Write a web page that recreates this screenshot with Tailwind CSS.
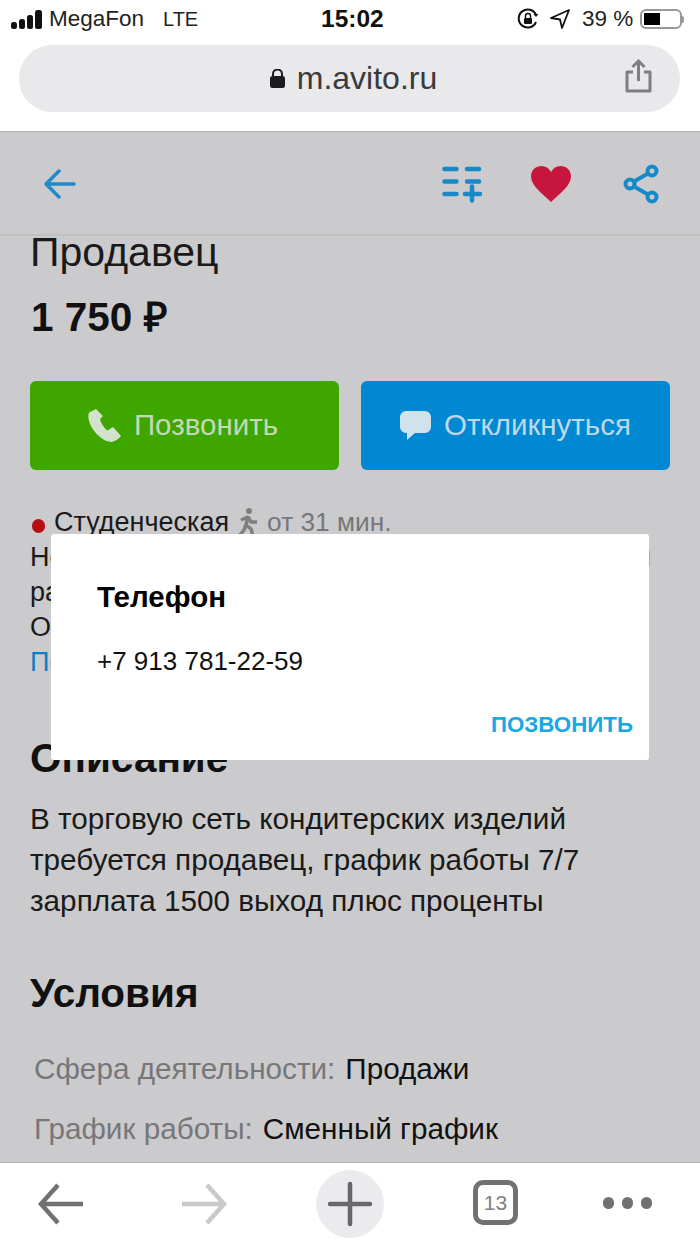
<!DOCTYPE html>
<html lang="ru">
<head>
  <meta charset="UTF-8" />
  <meta name="viewport" content="width=device-width, initial-scale=1.0" />
  <script src="https://cdn.jsdelivr.net/npm/@tailwindcss/browser@4"></script>
  <title>m.avito.ru</title>
</head>
<body class="bg-white font-['Liberation_Sans',Arial,sans-serif]">
  <div class="relative w-[700px] h-[1245px] overflow-hidden flex flex-col">

    <!-- browser top -->
    <div class="h-[131px] shrink-0 bg-white">
      <div class="h-[45px] flex items-center pl-[11px] pb-[7px] text-[22.500px] text-[#222]">
        <svg class="w-[31px] h-[19px] shrink-0" viewBox="0 0 31 19" fill="#111">
          <rect x="0" y="12" width="6" height="7" rx="2.500" />
          <rect x="8" y="9" width="6" height="10" rx="2.500" />
          <rect x="16" y="5" width="6" height="14" rx="2.500" />
          <rect x="24" y="0" width="7" height="19" rx="2.500" />
        </svg>
        <span class="ml-[7px] w-[96px]">MegaFon</span>
        <span class="ml-[18px] w-[158px] text-[20px]">LTE</span>
        <span class="w-[62px] font-bold text-[24.500px] text-[#111]">15:02</span>
        <svg class="ml-[134px] w-[22px] h-[22px] shrink-0" viewBox="0 0 22 22" fill="none" stroke="#111" stroke-width="2">
          <path d="M19 14a9 9 0 1 1 0-7" />
          <path d="M21.500 6l-2.500 3l-2.500-3z" fill="#111" stroke="none" />
          <rect x="7" y="10" width="8" height="6" rx="1" fill="#111" stroke="none" />
          <path d="M8.500 10V8a2.500 2.500 0 0 1 5 0v2" stroke-width="1.500" />
        </svg>
        <svg class="ml-[10px] w-[22px] h-[22px] shrink-0" viewBox="0 0 22 22" fill="none" stroke="#111" stroke-width="1.800" stroke-linejoin="round">
          <path d="M20 2L2 10l9 1.500L13 20z" />
        </svg>
        <span class="ml-[11px] w-[52px] whitespace-nowrap">39 %</span>
        <div class="ml-[6px] w-[42px] h-[20px] shrink-0 border-2 border-[#999] rounded-[6px] p-[2px]">
          <div class="w-[16px] h-full bg-black"></div>
        </div>
        <div class="w-[2px] h-[7px] shrink-0 bg-[#999] rounded-r-sm"></div>
      </div>
      <div class="mx-[19px] w-[661px] h-[67px] rounded-[33px] bg-[#e9e9eb] relative flex items-center justify-center pl-[8px]">
        <svg class="w-[15px] h-[19px] mr-[12px]" viewBox="0 0 15 19" fill="#1c1c1e">
          <rect x="0" y="7" width="15" height="12" rx="2.500" />
          <path d="M3 8V5a4.500 4.500 0 0 1 9 0v3" fill="none" stroke="#1c1c1e" stroke-width="2" />
        </svg>
        <span class="text-[32px] leading-[36px] mb-[2px] text-[#3a3a3c]">m.avito.ru</span>
        <svg class="absolute left-[606px] top-[14px] w-[27px] h-[34px]" viewBox="0 0 27 34" fill="none" stroke="#7d7f82" stroke-width="3">
          <path d="M8 13H2v19h23V13h-6" stroke-linejoin="round" />
          <path d="M13.500 22V2M7.500 8l6-6l6 6" />
        </svg>
      </div>
    </div>

    <!-- page -->
    <div class="relative flex-1 min-h-0 bg-[#cbcbcd] overflow-hidden">
      <header class="h-[105px] border-t border-[#b4b4b5] border-b-2 border-b-[#c1c1c2] flex items-center relative">
        <svg class="absolute left-[44px] top-[37px] w-[32px] h-[30px]" viewBox="0 0 32 30" fill="none" stroke="#1f8cc9" stroke-width="3.500" stroke-linecap="round" stroke-linejoin="round">
          <path d="M30 15H3M15 2L2 15l13 13" />
        </svg>
        <svg class="absolute left-[442px] top-[34px] w-[40px] h-[37px]" viewBox="0 0 40 37" fill="none" stroke="#1689c9" stroke-width="4.500" stroke-linecap="round">
          <path d="M2.500 3h12M25 3h12M2.500 15.500h12M25 15.500h12M2.500 28h12M23 28h15M30 20.500v14" />
        </svg>
        <svg class="absolute left-[531px] top-[34px] w-[40px] h-[36px]" viewBox="0 0 40 36" fill="#c7163d">
          <path d="M20 36C12 28 0 20 0 10.500C0 4 5 0 10.500 0C14.500 0 18 2 20 6C22 2 25.500 0 29.500 0C35 0 40 4 40 10.500C40 20 28 28 20 36z" />
        </svg>
        <svg class="absolute left-[623px] top-[32px] w-[36px] h-[40px]" viewBox="0 0 36 40" fill="none" stroke="#1689c9" stroke-width="4">
          <circle cx="29" cy="7" r="4.500" />
          <circle cx="7" cy="20" r="4.500" />
          <circle cx="29" cy="33" r="4.500" />
          <path d="M25 9.500L11 17.500M11 22.500L25 30.500" />
        </svg>
      </header>

      <div class="px-[30px]">
        <h1 class="text-[41px] leading-[40px] mt-[-4px] text-[#1a1a1a]">Продавец</h1>
        <p class="mt-[23px] pl-[1px] text-[40.500px] leading-[44px] font-bold text-[#111]">1 750 ₽</p>

        <div class="mt-[42px] flex gap-[22px]">
          <button class="w-[309px] h-[89px] rounded-[6px] bg-[#3fa600] flex items-center justify-center text-[29.500px] text-[#c4d9b8]">
            <svg class="w-[33px] h-[33px] mr-[13px] mb-[1px]" viewBox="0 0 33 33" fill="#d3e2cc">
              <path d="M8 0L1 3.500C-1 9 2 17 7 23C12 29 18 33 24 33C27 32 31 30 33 27L25 18L19.500 21.500C16 19 13 14 12 10L15 7z" />
            </svg>
            <span class="mr-[3px]">Позвонить</span>
          </button>
          <button class="w-[309px] h-[89px] rounded-[6px] bg-[#0088d2] flex items-center justify-center text-[29.500px] text-[#bcd9ea]">
            <svg class="w-[31px] h-[29px] mr-[13px]" viewBox="0 0 31 29" fill="#d0e2ec">
              <path d="M6 0h19a6 6 0 0 1 6 6v10a6 6 0 0 1-6 6H15l-8 7v-7H6a6 6 0 0 1-6-6V6a6 6 0 0 1 6-6z" />
            </svg>
            Откликнуться
          </button>
        </div>

        <div class="mt-[35px] text-[27px] leading-[35px] text-[#1a1a1a]">
          <div class="flex items-center">
            <span class="ml-[2px] w-[13px] h-[14px] rounded-full bg-[#b50f12] mt-[6px] mr-[9px]"></span>
            <span>Студенческая</span>
            <svg class="ml-[8px] w-[22px] h-[29px]" viewBox="0 0 22 29" fill="none" stroke="#7f7f80" stroke-width="3.500">
              <circle cx="12" cy="3" r="3" fill="#7f7f80" stroke="none" />
              <path d="M11 8L9 17M9 17l5 4l2 7M9 17l-2 5l-5 6M11 9L4 12M11 9l3 5h6" />
            </svg>
            <span class="ml-[8px] text-[26.300px] text-[#77777a]">от 31 мин.</span>
          </div>
          <div class="flex justify-between pr-[19px]"><span>Не</span><span>н</span></div>
          <div>ра</div>
          <div>О.</div>
          <div class="text-[#0a7fc4]">По</div>
        </div>

        <h2 class="mt-[56px] text-[40.500px] leading-[44px] font-bold text-[#111]">Описание</h2>
        <p class="mt-[18px] text-[29.700px] leading-[41px] text-[#1a1a1a]">В торговую сеть кондитерских изделий<br />требуется продавец, график работы 7/7<br />зарплата 1500 выход плюс проценты</p>

        <h2 class="mt-[50px] text-[40.500px] leading-[44px] font-bold text-[#111]">Условия</h2>
        <dl class="mt-[34px] pl-[4px] text-[29.700px] leading-[40px]">
          <div class="flex gap-[10px]"><dt class="text-[#77777a]">Сфера деятельности:</dt><dd class="text-[#111]">Продажи</dd></div>
          <div class="mt-[20px] flex gap-[10px]"><dt class="text-[#77777a]">График работы:</dt><dd class="text-[#111]">Сменный график</dd></div>
        </dl>
      </div>
    </div>

    <!-- phone dialog -->
    <div class="absolute left-[51px] top-[534px] w-[598px] h-[226px] bg-white rounded-[3px] pl-[46px] pr-[16px] pt-[47px]">
      <h3 class="text-[29.500px] leading-[32px] font-bold text-black">Телефон</h3>
      <p class="mt-[33px] text-[26px] leading-[30px] text-[#111]">+7 913 781-22-59</p>
      <div class="mt-[34px] text-right text-[22.300px] leading-[30px] font-bold text-[#19a7e6]">ПОЗВОНИТЬ</div>
    </div>

    <!-- browser bottom -->
    <nav class="h-[83px] shrink-0 bg-white border-t border-[#b0b0b1] relative">
      <svg class="absolute left-[37px] top-[20px] w-[46px] h-[42px]" viewBox="0 0 46 42" fill="none" stroke="#6f7173" stroke-width="4.500" stroke-linejoin="miter">
        <path d="M46 21H4M21 2L4 21l17 19" />
      </svg>
      <svg class="absolute left-[182px] top-[20px] w-[46px] h-[42px]" viewBox="0 0 46 42" fill="none" stroke="#c9c9cb" stroke-width="4.500">
        <path d="M0 21h42M25 2l17 19l-17 19" />
      </svg>
      <div class="absolute left-[316px] top-[7px] w-[68px] h-[68px] rounded-full bg-[#ebebee] flex items-center justify-center">
        <svg class="w-[46px] h-[46px]" viewBox="0 0 46 46" fill="none" stroke="#66686b" stroke-width="4.500" stroke-linecap="round">
          <path d="M23 3v40M3 23h40" />
        </svg>
      </div>
      <div class="absolute left-[473px] top-[17px] w-[45px] h-[45px] border-[5px] border-[#6f7173] rounded-[10px] flex items-center justify-center text-[21px] text-[#7e8083]">13</div>
      <div class="absolute left-[603px] top-[34px] flex gap-[8px]">
        <span class="w-[11px] h-[12px] rounded-full bg-[#6f7173]"></span>
        <span class="w-[11px] h-[12px] rounded-full bg-[#6f7173]"></span>
        <span class="w-[11px] h-[12px] rounded-full bg-[#6f7173]"></span>
      </div>
    </nav>
  </div>
</body>
</html>
